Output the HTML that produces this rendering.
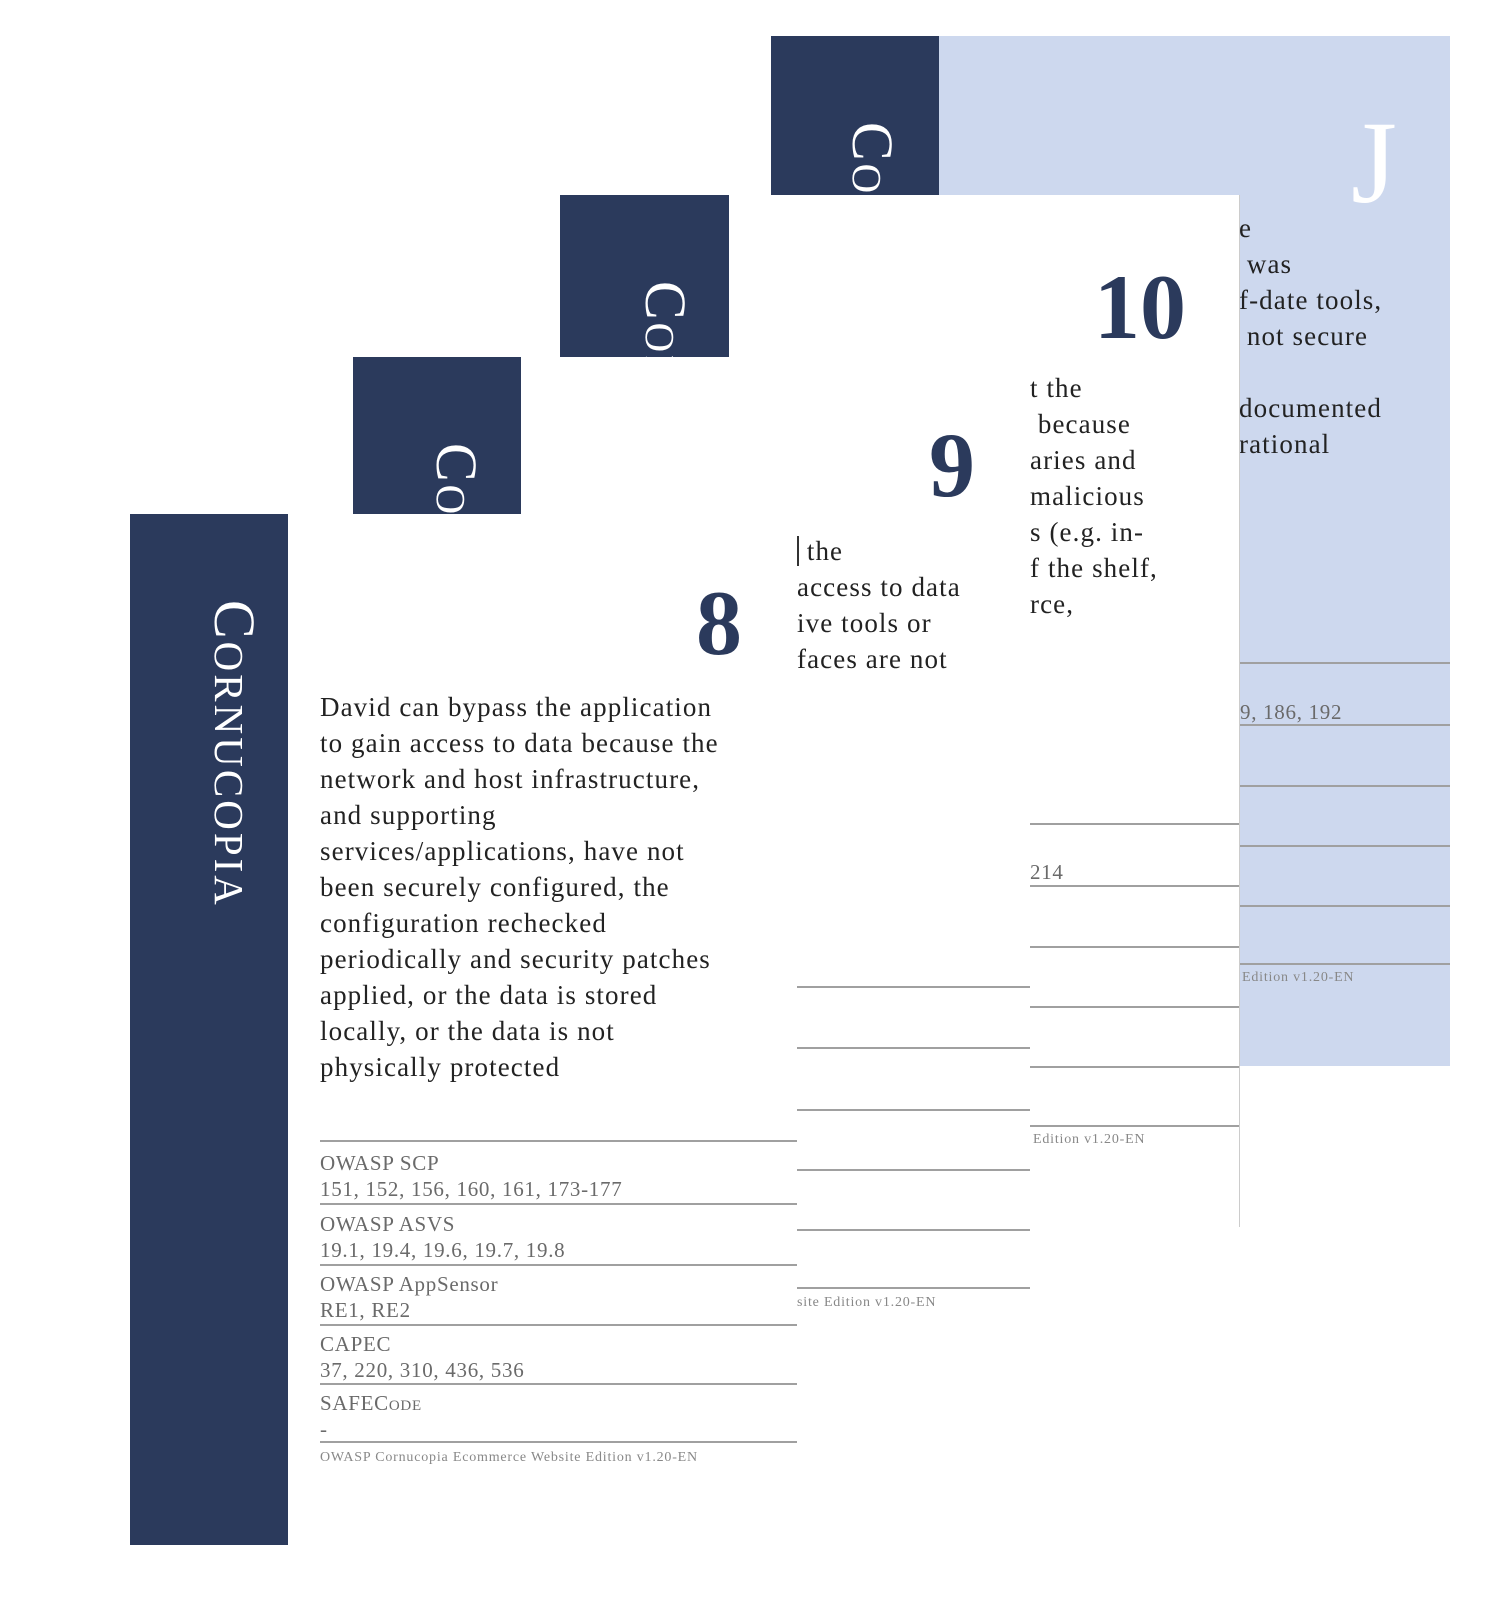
<!DOCTYPE html>
<html><head><meta charset="utf-8"><style>
html,body{margin:0;padding:0;background:#fff;}
body{width:1490px;height:1600px;position:relative;overflow:hidden;font-family:"Liberation Serif",serif;}
.card{position:absolute;overflow:hidden;background:#fff;}
.strip{position:absolute;left:0;top:0;bottom:0;background:#2b3a5c;}
.corn{position:absolute;writing-mode:vertical-rl;color:#fff;font-size:58px;font-variant:small-caps;letter-spacing:3px;line-height:1;white-space:nowrap;}
.num{position:absolute;color:#2b3a5c;font-weight:bold;font-size:92px;line-height:1;}
.t{position:absolute;color:#222;font-size:27px;letter-spacing:1.1px;line-height:36px;white-space:nowrap;}
.hl{position:absolute;height:2px;background:#a0a0a0;}
.ref{position:absolute;color:#6a6a6a;font-size:21px;letter-spacing:0.7px;line-height:26px;white-space:nowrap;}
.foot{position:absolute;color:#888;font-size:14px;letter-spacing:0.8px;white-space:nowrap;}
</style></head><body>

<div class="card" style="left:771px;top:36px;width:679px;height:1030px;background:#cdd8ee;z-index:1">
  <div class="strip" style="width:168px"><div class="corn" style="left:72px;top:86px">Cornucopia</div></div>
  <div class="num" style="left:580px;top:68px;color:#fff;font-weight:normal;font-size:118px">J</div>
  <div class="t" style="left:468px;top:174px">e<br>&nbsp;was<br>f-date tools,<br>&nbsp;not secure<br>&nbsp;<br>documented<br>rational</div>
  <div class="hl" style="left:468px;right:0;top:626px"></div>
  <div class="ref" style="left:469px;top:663px">9, 186, 192</div>
  <div class="hl" style="left:468px;right:0;top:688px"></div>
  <div class="hl" style="left:468px;right:0;top:749px"></div>
  <div class="hl" style="left:468px;right:0;top:809px"></div>
  <div class="hl" style="left:468px;right:0;top:869px"></div>
  <div class="hl" style="left:468px;right:0;top:927px"></div>
  <div class="foot" style="left:471px;top:934px">Edition v1.20-EN</div>
</div>

<div class="card" style="left:560px;top:195px;width:679px;height:1032px;z-index:2;border-right:1px solid #ccc">
  <div class="strip" style="width:169px"><div class="corn" style="left:76px;top:86px">Cornucopia</div></div>
  <div class="num" style="left:534px;top:66px">10</div>
  <div class="t" style="left:470px;top:175px">t the<br>&nbsp;because<br>aries and<br>malicious<br>s (e.g. in-<br>f the shelf,<br>rce,</div>
  <div class="hl" style="left:470px;right:0;top:628px"></div>
  <div class="ref" style="left:470px;top:664px">214</div>
  <div class="hl" style="left:470px;right:0;top:690px"></div>
  <div class="hl" style="left:470px;right:0;top:751px"></div>
  <div class="hl" style="left:470px;right:0;top:811px"></div>
  <div class="hl" style="left:470px;right:0;top:871px"></div>
  <div class="hl" style="left:470px;right:0;top:930px"></div>
  <div class="foot" style="left:473px;top:937px">Edition v1.20-EN</div>
</div>

<div class="card" style="left:353px;top:357px;width:677px;height:1031px;z-index:3">
  <div class="strip" style="width:168px"><div class="corn" style="left:74px;top:86px">Cornucopia</div></div>
  <div class="num" style="left:576px;top:62px">9</div>
  <div class="t" style="left:444px;top:176px"><span style="border-left:2px solid #333">&nbsp;</span>the<br>access to data<br>ive tools or<br>faces are not</div>
  <div class="hl" style="left:444px;right:0;top:629px"></div>
  <div class="hl" style="left:444px;right:0;top:690px"></div>
  <div class="hl" style="left:444px;right:0;top:752px"></div>
  <div class="hl" style="left:444px;right:0;top:812px"></div>
  <div class="hl" style="left:444px;right:0;top:872px"></div>
  <div class="hl" style="left:444px;right:0;top:930px"></div>
  <div class="foot" style="left:444px;top:938px">site Edition v1.20-EN</div>
</div>

<div class="card" style="left:130px;top:514px;width:667px;height:1031px;z-index:4">
  <div class="strip" style="width:158px"><div class="corn" style="left:75px;top:86px">Cornucopia</div></div>
  <div class="num" style="left:566px;top:63px">8</div>
  <div class="t" style="left:190px;top:175px">David can bypass the application<br>to gain access to data because the<br>network and host infrastructure,<br>and supporting<br>services/applications, have not<br>been securely configured, the<br>configuration rechecked<br>periodically and security patches<br>applied, or the data is stored<br>locally, or the data is not<br>physically protected</div>
  <div class="hl" style="left:190px;right:0;top:626px"></div>
  <div class="ref" style="left:190px;top:636px">OWASP SCP<br>151, 152, 156, 160, 161, 173-177</div>
  <div class="hl" style="left:190px;right:0;top:689px"></div>
  <div class="ref" style="left:190px;top:697px">OWASP ASVS<br>19.1, 19.4, 19.6, 19.7, 19.8</div>
  <div class="hl" style="left:190px;right:0;top:750px"></div>
  <div class="ref" style="left:190px;top:757px">OWASP AppSensor<br>RE1, RE2</div>
  <div class="hl" style="left:190px;right:0;top:810px"></div>
  <div class="ref" style="left:190px;top:817px">CAPEC<br>37, 220, 310, 436, 536</div>
  <div class="hl" style="left:190px;right:0;top:869px"></div>
  <div class="ref" style="left:190px;top:876px">S<span style="font-variant:small-caps">AFE</span>C<span style="font-variant:small-caps">ode</span><br>-</div>
  <div class="hl" style="left:190px;right:0;top:927px"></div>
  <div class="foot" style="left:190px;top:936px">OWASP Cornucopia Ecommerce Website Edition v1.20-EN</div>
</div>

</body></html>
